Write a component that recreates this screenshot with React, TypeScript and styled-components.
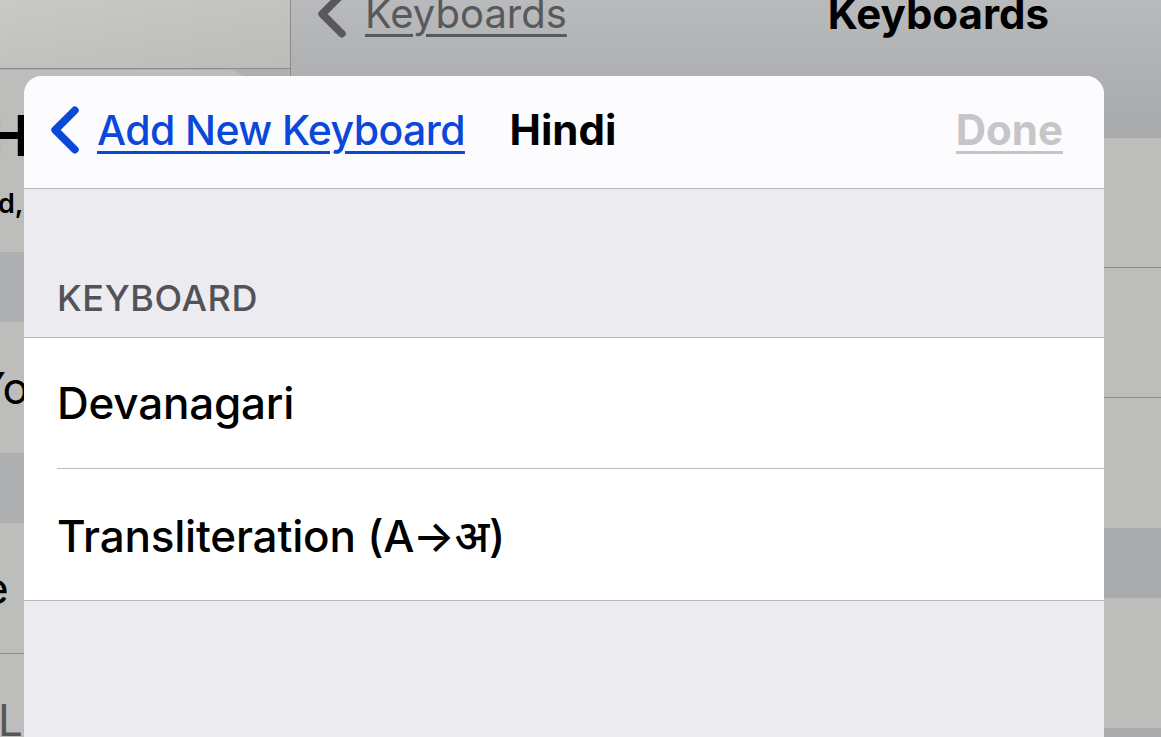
import React from "react";
import styled, { createGlobalStyle } from "styled-components";

const GlobalStyle = createGlobalStyle`
  html, body {
    margin: 0;
    padding: 0;
  }
  body {
    font-family: Inter, "Noto Sans", "Noto Sans Devanagari", "Lohit Devanagari", sans-serif;
    overflow: hidden;
  }
  #root {
    width: 1161px;
    height: 737px;
  }
`;

const Screen = styled.div`
  position: relative;
  display: flex;
  width: 1161px;
  height: 737px;
  overflow: hidden;
  background: #aaabad;
`;

/* dimmed split view behind the sheet */

const Sidebar = styled.aside`
  width: 291px;
  flex-shrink: 0;
  box-sizing: border-box;
  border-right: 1px solid #8a8a8a;
  background: #aeafb0;
  display: flex;
  flex-direction: column;
  overflow: hidden;
`;

const SidebarHeader = styled.div`
  height: 68px;
  flex-shrink: 0;
  border-bottom: 1px solid #8b8c8b;
  background: linear-gradient(170deg, #c9c9c7 0%, #bfbfbd 70%, #bcbcba 100%);
`;

const SidebarCard = styled.div<{ $gap: number }>`
  flex-shrink: 0;
  margin: ${(p) => p.$gap}px 42px 0 -20px;
  padding-left: 20px;
  border-radius: 20px;
  background: #bdbebb;
  overflow: hidden;
`;

const ProfileBlock = styled.div`
  height: 182px;
  display: flex;
  flex-direction: column;
`;

const ProfileName = styled.div`
  margin: 38px 0 0 -12px;
  font-size: 56px;
  line-height: 56px;
  font-weight: 700;
  color: #000;
  white-space: nowrap;
`;

const ProfileSub = styled.div`
  margin: 24px 0 0 -2px;
  font-size: 27px;
  line-height: 32px;
  font-weight: 600;
  color: #000;
  white-space: nowrap;
`;

const SidebarRow = styled.div<{ $muted?: boolean; $divider?: boolean }>`
  height: 131px;
  box-sizing: border-box;
  display: flex;
  align-items: center;
  font-size: 44px;
  color: ${(p) => (p.$muted ? "#565657" : "#000")};
  white-space: nowrap;
  border-bottom: ${(p) => (p.$divider ? "1px solid #8a8b8b" : "none")};
`;

const SidebarLabel = styled.span<{ $shift: number }>`
  margin-left: ${(p) => p.$shift}px;
`;

const Detail = styled.main`
  flex: 1;
  display: flex;
  flex-direction: column;
  background: #aaabad;
  overflow: hidden;
`;

const NavBar = styled.div`
  height: 138px;
  flex-shrink: 0;
  box-sizing: border-box;
  padding: 0 112px 0 25px;
  background: linear-gradient(180deg, #b9babc 0%, #aeafb1 60%, #a9aaac 100%);
`;

const NavRow = styled.div`
  height: 28px;
  display: flex;
  align-items: center;
`;

const NavBack = styled.span`
  margin-left: 18px;
  font-size: 40px;
  line-height: 28px;
  color: #58595b;
  text-decoration: underline;
  text-decoration-thickness: 3px;
  text-underline-offset: 6px;
`;

const NavTitle = styled.span`
  margin-left: auto;
  font-size: 42px;
  line-height: 28px;
  font-weight: 700;
  color: #000;
`;

const DetailGroup = styled.div<{ $gap: number }>`
  flex-shrink: 0;
  margin-top: ${(p) => p.$gap}px;
  background: #bdbebb;
`;

const DetailCell = styled.div<{ $divider?: boolean }>`
  height: 130px;
  box-sizing: border-box;
  border-bottom: ${(p) => (p.$divider ? "1px solid #8a8b8b" : "none")};
`;

/* the sheet */

const Sheet = styled.section`
  position: absolute;
  left: 24px;
  top: 76px;
  width: 1080px;
  bottom: 0;
  border-radius: 18px 18px 0 0;
  overflow: hidden;
  background: #ebebf0;
  display: flex;
  flex-direction: column;
`;

const SheetHeader = styled.header`
  height: 113px;
  flex-shrink: 0;
  box-sizing: border-box;
  border-bottom: 1px solid #b7b7bb;
  background: #fcfcfe;
  display: grid;
  grid-template-columns: 1fr auto 1fr;
  align-items: center;
  padding: 0 27px 4px 25px;
`;

const BackButton = styled.div`
  display: flex;
  align-items: center;
  gap: 17px;
`;

const LinkText = styled.span<{ $tone: string }>`
  font-size: 41px;
  line-height: 52px;
  font-weight: 500;
  letter-spacing: -0.6px;
  color: ${(p) => p.$tone};
  text-decoration: underline;
  text-decoration-thickness: 3px;
  text-underline-offset: 6px;
  white-space: nowrap;
`;

const SheetTitle = styled.h1`
  margin: 0;
  font-size: 42px;
  line-height: 52px;
  font-weight: 700;
  color: #000;
`;

const DoneButton = styled(LinkText)`
  justify-self: end;
  margin-right: 14px;
  font-size: 42px;
  font-weight: 700;
  letter-spacing: 0;
`;

const SectionHeader = styled.div`
  height: 148px;
  flex-shrink: 0;
  box-sizing: border-box;
  display: flex;
  align-items: flex-end;
  padding: 0 0 19px 33px;
  font-size: 36px;
  line-height: 40px;
  font-weight: 500;
  color: #535258;
  letter-spacing: 0.6px;
`;

const OptionList = styled.div`
  flex-shrink: 0;
  background: #fff;
  border-top: 1px solid #b9b9bd;
  border-bottom: 1px solid #b9b9bd;
  padding-left: 33px;
`;

const OptionRow = styled.div<{ $divider?: boolean }>`
  height: 131px;
  box-sizing: border-box;
  display: flex;
  align-items: center;
  font-size: 44px;
  font-weight: 500;
  letter-spacing: -0.2px;
  color: #000;
  border-bottom: ${(p) => (p.$divider ? "1px solid #bcbcc0" : "none")};
`;

const Chevron = ({ color, size }: { color: string; size: number }) => (
  <svg width={size * 0.62} height={size} viewBox="0 0 30 48" fill="none">
    <path
      d="M25 5 L6 24 L25 43"
      stroke={color}
      strokeWidth="7.5"
      strokeLinecap="round"
      strokeLinejoin="round"
    />
  </svg>
);

const options = ["Devanagari", "Transliteration (A→अ)"];

const App = () => {
  return (
    <>
      <GlobalStyle />
      <Screen>
        <Sidebar>
          <SidebarHeader />
          <SidebarCard $gap={1}>
            <ProfileBlock>
              <ProfileName>H</ProfileName>
              <ProfileSub>d,</ProfileSub>
            </ProfileBlock>
          </SidebarCard>
          <SidebarCard $gap={70}>
            <SidebarRow>
              <SidebarLabel $shift={-24}>Yo</SidebarLabel>
            </SidebarRow>
          </SidebarCard>
          <SidebarCard $gap={70}>
            <SidebarRow $divider>
              <SidebarLabel $shift={-17}>e</SidebarLabel>
            </SidebarRow>
            <SidebarRow $muted>
              <SidebarLabel $shift={-2}>Li</SidebarLabel>
            </SidebarRow>
          </SidebarCard>
        </Sidebar>

        <Detail>
          <NavBar>
            <NavRow>
              <Chevron color="#58595b" size={50} />
              <NavBack>Keyboards</NavBack>
              <NavTitle>Keyboards</NavTitle>
            </NavRow>
          </NavBar>
          <DetailGroup $gap={0}>
            <DetailCell $divider />
            <DetailCell $divider />
            <DetailCell />
          </DetailGroup>
          <DetailGroup $gap={70}>
            <DetailCell />
          </DetailGroup>
        </Detail>

        <Sheet>
          <SheetHeader>
            <BackButton>
              <Chevron color="#0a48da" size={50} />
              <LinkText $tone="#0a48da">Add New Keyboard</LinkText>
            </BackButton>
            <SheetTitle>Hindi</SheetTitle>
            <DoneButton $tone="#c6c6c8">Done</DoneButton>
          </SheetHeader>
          <SectionHeader>KEYBOARD</SectionHeader>
          <OptionList>
            {options.map((label, i) => (
              <OptionRow key={label} $divider={i < options.length - 1}>
                {label}
              </OptionRow>
            ))}
          </OptionList>
        </Sheet>
      </Screen>
    </>
  );
};

export default App;
